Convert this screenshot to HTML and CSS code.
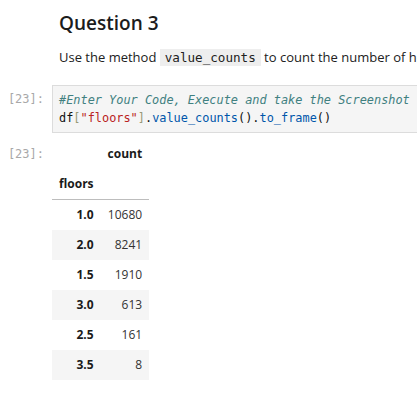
FILE: index.html
```html
<!DOCTYPE html>
<html>
<head>
<meta charset="utf-8">
<link rel="stylesheet" href="styles.css">
</head>
<body>
<div class="nb">
  <div class="md">
    <h2 class="q">Question 3</h2>
    <p class="para">Use the method <code class="ic">value_counts</code> to count the number of houses with unique floor values</p>
  </div>
  <div class="cell code-cell">
    <div class="prompt">[23]:</div>
    <div class="editor">
<pre class="src"><span class="c">#Enter Your Code, Execute and take the Screenshot</span>
df<span class="b">[</span><span class="s">"floors"</span><span class="b">]</span>.<span class="p">value_counts</span>().<span class="p">to_frame</span>()</pre>
    </div>
  </div>
  <div class="cell out-cell">
    <div class="prompt">[23]:</div>
    <div class="out">
      <table class="df">
        <thead>
          <tr><th class="blank"></th><th>count</th></tr>
          <tr class="idxname"><th class="left">floors</th><th></th></tr>
        </thead>
        <tbody>
          <tr><th>1.0</th><td>10680</td></tr>
          <tr><th>2.0</th><td>8241</td></tr>
          <tr><th>1.5</th><td>1910</td></tr>
          <tr><th>3.0</th><td>613</td></tr>
          <tr><th>2.5</th><td>161</td></tr>
          <tr><th>3.5</th><td>8</td></tr>
        </tbody>
      </table>
    </div>
  </div>
</div>
</body>
</html>
```
FILE: styles.css
```css
html, body {
  margin: 0;
  padding: 0;
  background: #ffffff;
  width: 417px;
  height: 410px;
  overflow: hidden;
}
.nb {
  font-family: "Open Sans", "Noto Sans", sans-serif;
  color: #212121;
  white-space: nowrap;
  overflow: hidden;
}
.md {
  padding-left: 59px;
  padding-top: 10px;
}
.q {
  margin: 0;
  font-size: 19px;
  font-weight: 600;
  line-height: 26px;
  color: #1c1c1c;
}
.para {
  margin: 12px 0 0 0;
  font-size: 13px;
  line-height: 19px;
}
.ic {
  font-family: "DejaVu Sans Mono", monospace;
  font-size: 12.6px;
  background: #eeeeee;
  padding: 1px 5px;
}
.cell {
  display: flex;
}
.code-cell {
  margin-top: 18px;
}
.prompt {
  width: 44px;
  flex: none;
  padding-right: 8px;
  text-align: right;
  font-family: "DejaVu Sans Mono", monospace;
  font-size: 12px;
  color: #a8a8a8;
  line-height: 17px;
}
.code-cell .prompt {
  padding-top: 6px;
}
.editor {
  flex: 1;
  background: #f5f5f5;
  border: 1px solid #dcdcdc;
  border-right: none;
  padding: 5px 0 5px 6px;
}
.src {
  margin: 0;
  font-family: "DejaVu Sans Mono", monospace;
  font-size: 11.9px;
  line-height: 18px;
  color: #111111;
}
.c { color: #408080; font-style: italic; }
.s { color: #ba2121; }
.b { color: #999977; }
.p { color: #0055aa; }
.out-cell {
  margin-top: 6px;
}
.out-cell .prompt {
  padding-top: 7px;
}
.df {
  border-collapse: collapse;
  font-size: 12px;
  color: #1a1a1a;
}
.df tr {
  height: 30px;
}
.df th, .df td {
  height: 30px;
  padding: 0 7px;
  text-align: right;
  line-height: 16px;
}
.df th {
  font-weight: 700;
}
.df td {
  font-weight: 400;
  color: #333333;
}
.df .left {
  text-align: left;
}
.df thead tr.idxname th {
  border-bottom: 1px solid #bdbdbd;
}
.df tbody tr:nth-child(even) {
  background: #f5f5f5;
}
```
